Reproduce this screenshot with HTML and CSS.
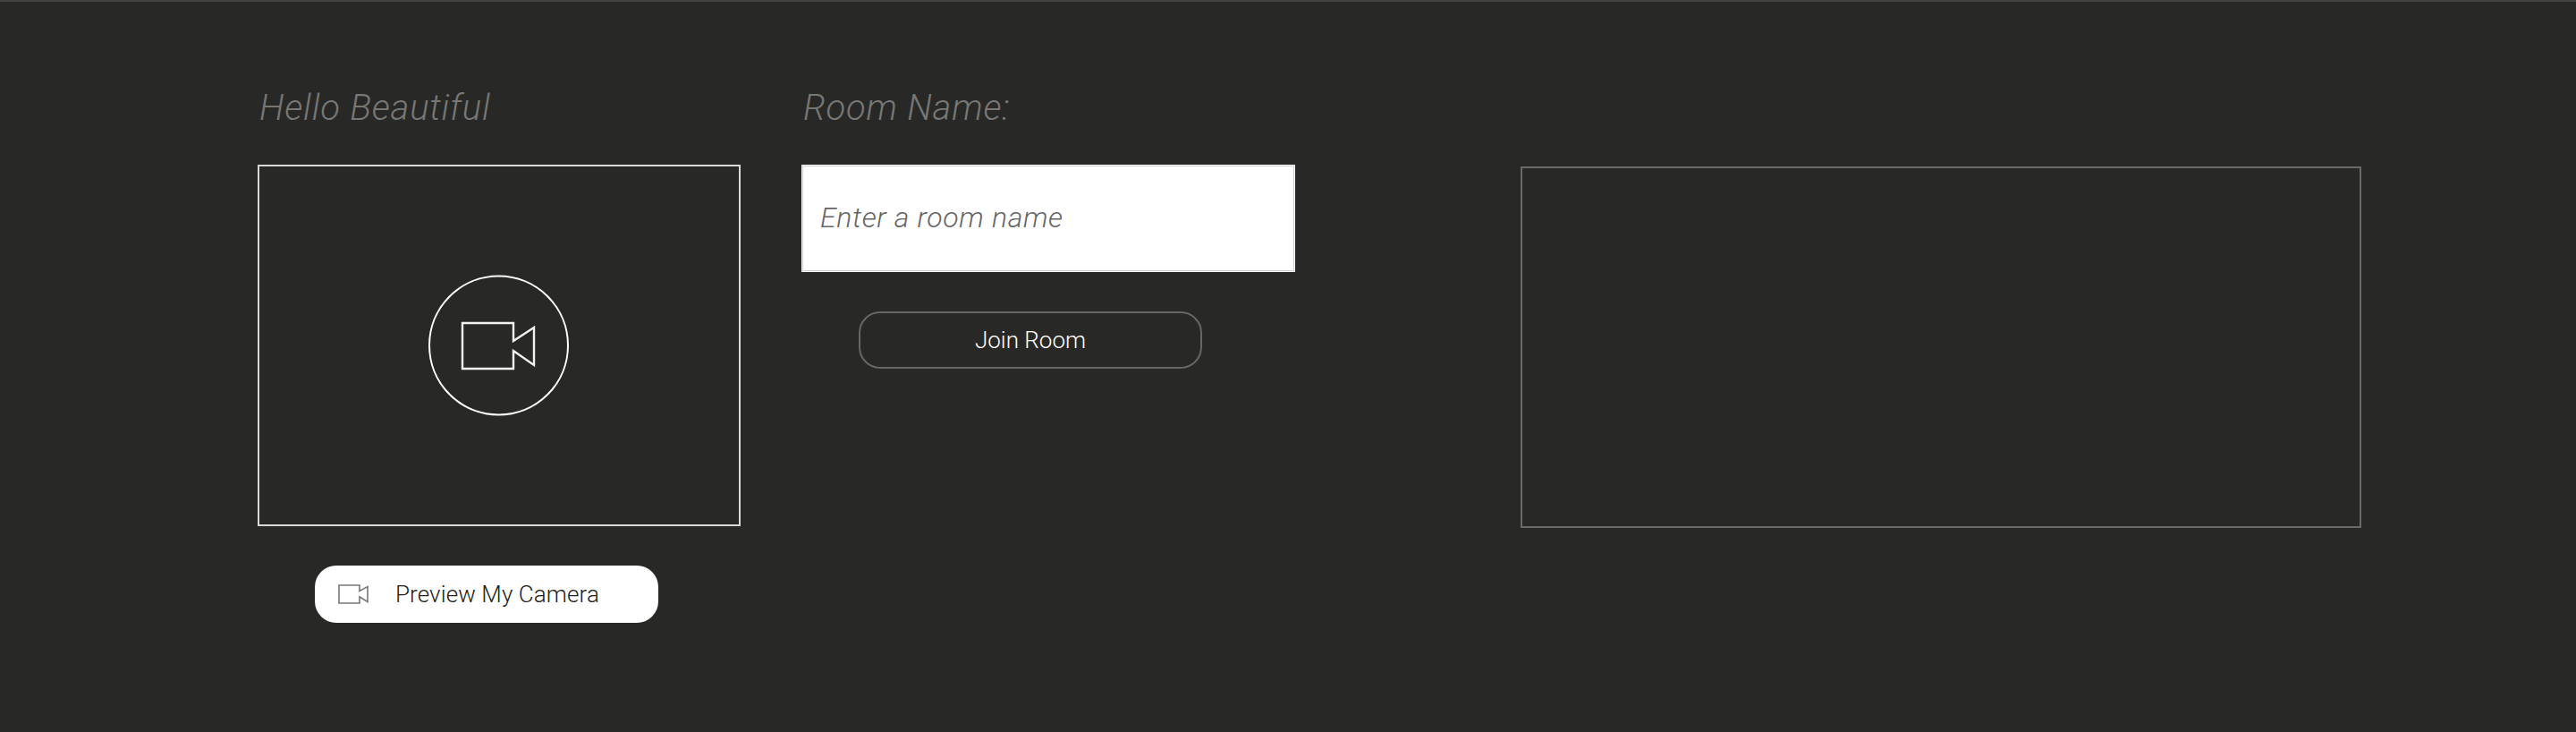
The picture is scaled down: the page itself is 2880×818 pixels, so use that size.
FILE: index.html
```html
<!DOCTYPE html>
<html lang="en">
<head>
<meta charset="utf-8">
<title>Video Room</title>
<link rel="stylesheet" href="styles.css">
</head>
<body>
<main class="page">
  <section class="col col-preview">
    <h2 class="heading">Hello Beautiful</h2>
    <div class="preview">
      <svg class="preview-icon" viewBox="0 0 160 160" width="160" height="160" aria-hidden="true">
        <circle cx="79.5" cy="80" r="77.5" fill="none" stroke="#fff" stroke-width="2"/>
        <path d="M39 55H96V75L119 60V102L96 86V106H39Z" fill="none" stroke="#f2f2f2" stroke-width="2.4" stroke-linejoin="miter"/>
      </svg>
    </div>
    <button class="btn btn-light" type="button">
      <svg class="btn-icon" viewBox="0 0 34 22" width="34" height="22" aria-hidden="true">
        <path d="M1 1H24V7.5L33 2.5V19.5L24 14V21H1Z" fill="none" stroke="#777" stroke-width="1.6"/>
      </svg>
      <span>Preview My Camera</span>
    </button>
  </section>
  <section class="col col-room">
    <h2 class="heading">Room Name:</h2>
    <input class="room-input" type="text" placeholder="Enter a room name">
    <button class="btn btn-dark" type="button">Join Room</button>
  </section>
  <section class="col col-remote">
    <div class="remote"></div>
  </section>
</main>
</body>
</html>
```
FILE: styles.css
```css
* { box-sizing: border-box; }
html, body { margin: 0; height: 100%; }
body {
  background: #282826;
  border-top: 2px solid #444442;
  font-family: Roboto, "Liberation Sans", Arial, sans-serif;
  font-weight: 300;
  overflow: hidden;
}
.page {
  display: flex;
  padding: 96px 0 0 288px;
}
.col { display: flex; flex-direction: column; align-items: flex-start; }
.col-preview { width: 540px; margin-right: 68px; }
.col-room { width: 552px; margin-right: 252px; }
.col-remote { width: 940px; padding-top: 88px; }
.heading {
  margin: 0 0 40px;
  height: 46px;
  padding-left: 2px;
  font-size: 40px;
  line-height: 46px;
  font-weight: 300;
  font-style: italic;
  color: #777775;
  letter-spacing: 0.8px;
}
.preview {
  width: 540px;
  height: 404px;
  border: 2px solid #d8d8d6;
  display: flex;
  align-items: center;
  justify-content: center;
}
.preview-icon { display: block; }
.btn {
  width: 384px;
  height: 64px;
  margin: 44px 0 0 64px;
  border-radius: 24px;
  font-family: inherit;
  font-weight: 300;
  font-size: 26px;
  display: flex;
  align-items: center;
  cursor: pointer;
}
.btn-light {
  background: #fff;
  color: #222220;
  border: 0;
  padding: 0 0 0 26px;
  gap: 30px;
  letter-spacing: 0.1px;
}
.btn-icon { display: block; flex: none; }
.btn-dark {
  background: transparent;
  color: #fff;
  border: 2px solid #666664;
  justify-content: center;
}
.room-input {
  display: block;
  width: 552px;
  height: 120px;
  padding: 0 20px 2px;
  background: #fff;
  border: 1px solid #fff;
  box-shadow: inset 0 0 0 1px #ccc;
  font-family: inherit;
  font-weight: 300;
  font-size: 32px;
  font-style: italic;
  letter-spacing: 0.65px;
  color: #666;
  border-radius: 0;
}
.room-input::placeholder { color: #666; opacity: 1; }
.remote {
  width: 940px;
  height: 404px;
  border: 2px solid #6a6a68;
}
```
